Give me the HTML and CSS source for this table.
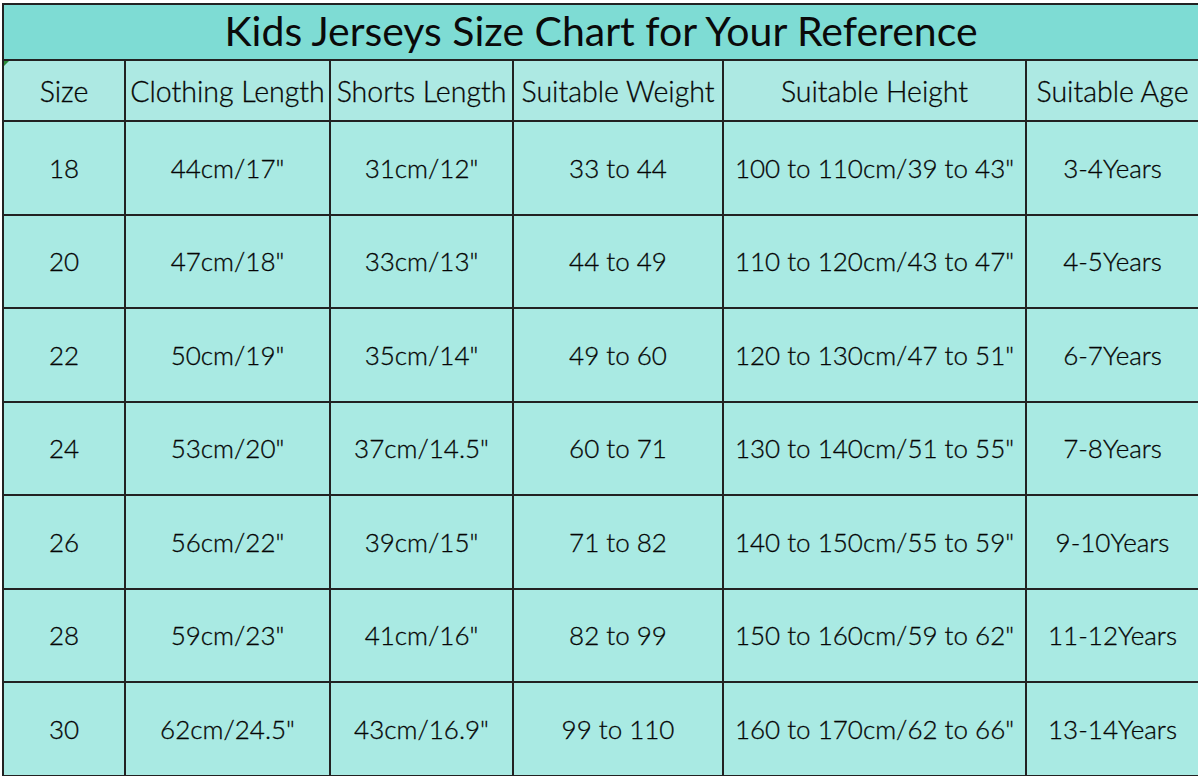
FILE: index.html
```html
<!DOCTYPE html>
<html>
<head>
<meta charset="utf-8">
<link rel="stylesheet" href="styles.css">
</head>
<body>
<div class="chart">
  <div class="title">Kids Jerseys Size Chart for Your Reference</div>
  <div class="hd first">Size</div>
  <div class="hd">Clothing Length</div>
  <div class="hd">Shorts Length</div>
  <div class="hd">Suitable Weight</div>
  <div class="hd">Suitable Height</div>
  <div class="hd">Suitable Age</div>

  <div class="c">18</div><div class="c">44cm/17"</div><div class="c">31cm/12"</div><div class="c">33 to 44</div><div class="c">100 to 110cm/39 to 43"</div><div class="c">3-4Years</div>
  <div class="c">20</div><div class="c">47cm/18"</div><div class="c">33cm/13"</div><div class="c">44 to 49</div><div class="c">110 to 120cm/43 to 47"</div><div class="c">4-5Years</div>
  <div class="c">22</div><div class="c">50cm/19"</div><div class="c">35cm/14"</div><div class="c">49 to 60</div><div class="c">120 to 130cm/47 to 51"</div><div class="c">6-7Years</div>
  <div class="c">24</div><div class="c">53cm/20"</div><div class="c">37cm/14.5"</div><div class="c">60 to 71</div><div class="c">130 to 140cm/51 to 55"</div><div class="c">7-8Years</div>
  <div class="c">26</div><div class="c">56cm/22"</div><div class="c">39cm/15"</div><div class="c">71 to 82</div><div class="c">140 to 150cm/55 to 59"</div><div class="c">9-10Years</div>
  <div class="c">28</div><div class="c">59cm/23"</div><div class="c">41cm/16"</div><div class="c">82 to 99</div><div class="c">150 to 160cm/59 to 62"</div><div class="c">11-12Years</div>
  <div class="c">30</div><div class="c">62cm/24.5"</div><div class="c">43cm/16.9"</div><div class="c">99 to 110</div><div class="c">160 to 170cm/62 to 66"</div><div class="c">13-14Years</div>
</div>
</body>
</html>
```
FILE: styles.css
```css
html, body {
  margin: 0;
  padding: 0;
  background: #ffffff;
}
body {
  padding: 3px 0 0 2px;
  font-family: Lato, "Open Sans", "Liberation Sans", sans-serif;
  font-weight: 300;
  color: #050505;
}
.chart {
  width: 1196px;
  box-sizing: border-box;
  display: grid;
  grid-template-columns: 120px 203px 181px 208px 301px 171px;
  grid-template-rows: 54px 59px repeat(7, 91.5px);
  gap: 2px;
  padding: 2px;
  background: #222;
}
.title {
  grid-column: 1 / -1;
  background: #7edcd4;
  display: flex;
  align-items: center;
  justify-content: center;
  font-size: 41px;
  font-weight: 400;
  padding-bottom: 3px;
  color: #0a0a0a;
}
.hd {
  background: #ade9e3;
  display: flex;
  align-items: center;
  justify-content: center;
  font-size: 28.5px;
  white-space: nowrap;
  position: relative;
  padding-top: 1px;
  -webkit-text-stroke: 0.3px #050505;
}
.hd.first::before {
  content: "";
  position: absolute;
  left: 0;
  top: 0;
  border-top: 5px solid #2c8a3a;
  border-right: 5px solid transparent;
}
.c {
  background: #a9eae3;
  display: flex;
  align-items: center;
  justify-content: center;
  font-size: 26px;
  white-space: nowrap;
  -webkit-text-stroke: 0.3px #050505;
}
```
